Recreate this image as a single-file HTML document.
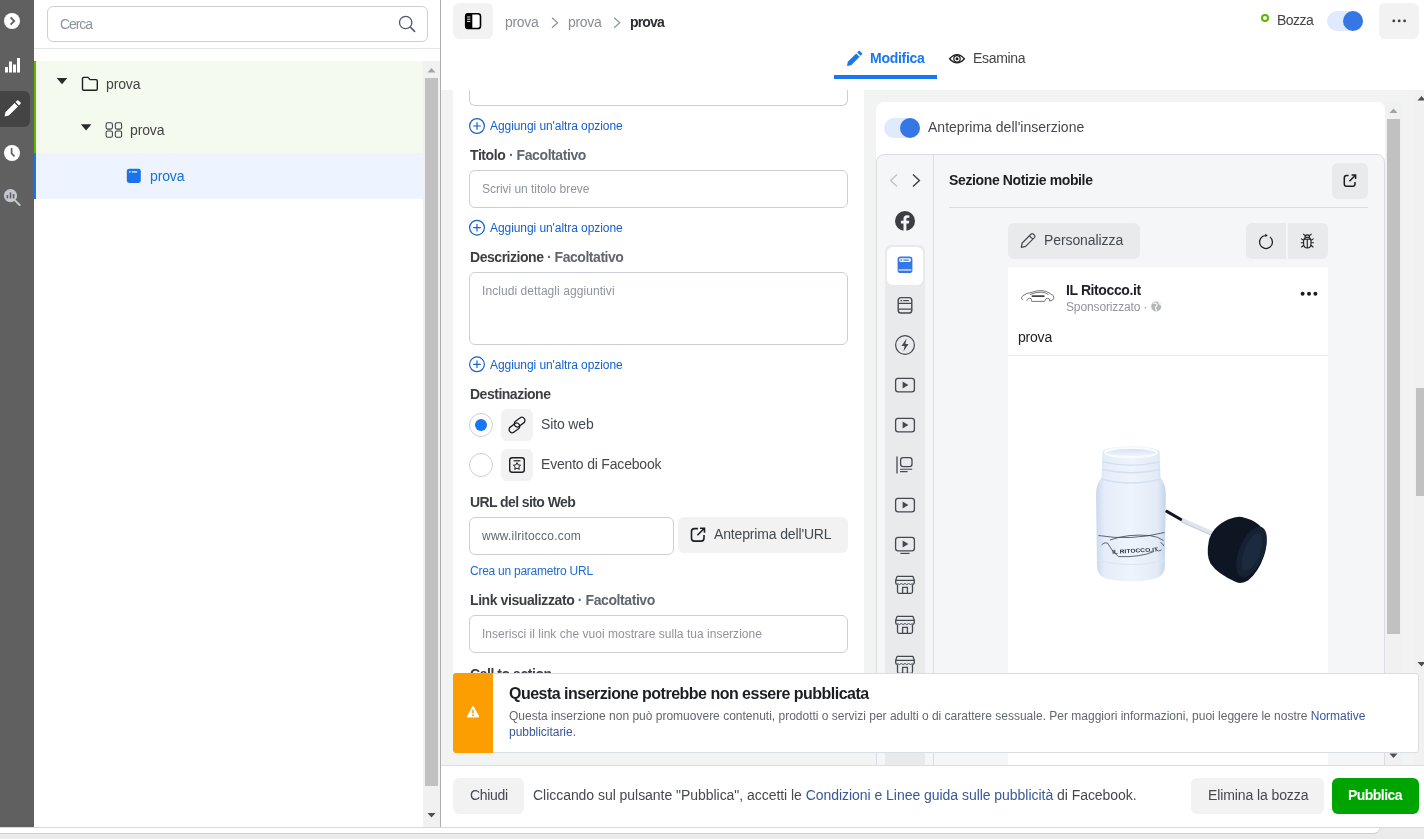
<!DOCTYPE html>
<html lang="it">
<head>
<meta charset="utf-8">
<title>Gestione inserzioni</title>
<style>
*{box-sizing:border-box;margin:0;padding:0}
html,body{width:1424px;height:839px;overflow:hidden;background:#fff}
body{font-family:"Liberation Sans",sans-serif;color:#1c1e21;position:relative}
.a{position:absolute}
.t{position:absolute;white-space:nowrap;line-height:1;font-size:14px;will-change:transform}
.t b{font-weight:700}
svg{position:absolute;overflow:visible}
/* sidebar */
#side{left:0;top:0;width:34px;height:827px;background:#606060}
#side .act{left:0;top:91px;width:30px;height:36px;background:#444;border-radius:0 6px 6px 0}
/* left panel */
#search{left:47px;top:6px;width:381px;height:36px;border:1px solid #ccd0d5;border-radius:6px;background:#fff}
#lpdiv{left:34px;top:48px;width:406px;height:1px;background:#e5e6e8}
.row{left:34px;width:389px;height:46px}
.r1{top:61px;background:#f5faee;border-left:2px solid #5db800}
.r2{top:107px;background:#f5faee;border-left:2px solid #5db800}
.r3{top:153px;background:#edf4ff;border-left:2px solid #1a73e8}
#lsb{left:423px;top:61px;width:17px;height:766px;background:#f1f1f1}
#lsb .th{left:2px;top:17px;width:13px;height:708px;background:#c1c1c1}
#vdiv{left:440px;top:0;width:1px;height:827px;background:#adadad}
/* main */
#graybg{left:441px;top:90px;width:983px;height:675px;background:#f2f3f3}
#formcard{left:453px;top:90px;width:411px;height:675px;background:#fff}
.inp{border:1px solid #ccd0d5;border-radius:6px;background:#fff}
.lbl{font-weight:700;color:#3b3e42}
.lbl i{font-style:normal;color:#606770}
.ph{font-size:12px;color:#8d949e}
.add{font-size:12px;color:#1461cc}
.btn{background:#f2f2f2;border-radius:6px}
.tx{color:#444950}
/* strip */
#strip{left:0;top:827px;width:1424px;height:12px;background:#ebebeb}
</style>
</head>
<body>

<!-- ================= SIDEBAR ================= -->
<div id="side" class="a">
  <div class="act a"></div>
</div>
<svg class="a" style="left:0;top:0" width="34" height="240" viewBox="0 0 34 240">
  <circle cx="12" cy="21" r="8" fill="#fff"/>
  <path d="M10.6 17.4 L14.2 21 L10.6 24.6" fill="none" stroke="#606060" stroke-width="1.8"/>
  <rect x="5" y="67" width="3" height="5.5" fill="#fff"/>
  <rect x="9" y="61.5" width="3" height="11" fill="#fff"/>
  <rect x="13" y="64.5" width="3" height="8" fill="#fff"/>
  <rect x="17" y="58" width="3" height="14.5" fill="#fff"/>
  <path d="M4.6 116.4 L5.4 112.2 L14.6 103 L18 106.4 L8.8 115.6 Z M15.6 102 L17.2 100.4 Q17.8 99.9 18.4 100.4 L20.6 102.6 Q21.1 103.2 20.6 103.8 L19 105.4 Z" fill="#fff"/>
  <circle cx="12" cy="153" r="8" fill="#fff"/>
  <path d="M11.6 148.5 V153.4 L14 155.8" fill="none" stroke="#606060" stroke-width="1.7" stroke-linecap="round"/>
  <circle cx="10.5" cy="195.7" r="6.6" fill="#c3c7cf"/>
  <path d="M15 200.4 L19.6 205" stroke="#c3c7cf" stroke-width="2" stroke-linecap="round"/>
  <rect x="6.6" y="195" width="1.6" height="3.4" fill="#606060"/>
  <rect x="9.7" y="192.4" width="1.6" height="6" fill="#606060"/>
  <rect x="12.8" y="194" width="1.6" height="4.4" fill="#606060"/>
</svg>

<!-- ================= LEFT PANEL ================= -->
<div id="search" class="a"></div>
<div class="t" style="letter-spacing:-1.09px;top:17px;left:60px;color:#8a94a0">Cerca</div>
<div id="lpdiv" class="a"></div>
<div class="row r1 a"></div>
<div class="row r2 a"></div>
<div class="row r3 a"></div>
<div class="t" style="letter-spacing:-0.13px;top:77px;left:106px;color:#444">prova</div>
<div class="t" style="letter-spacing:-0.13px;top:123px;left:130px;color:#444">prova</div>
<div class="t" style="letter-spacing:-0.13px;top:169px;left:150px;color:#1a6fe0">prova</div>
<div id="lsb" class="a"><div class="th a"></div></div>
<div id="vdiv" class="a"></div>
<svg class="a" style="left:0;top:0" width="440" height="210" viewBox="0 0 440 210">
  <circle cx="405.7" cy="22.5" r="6.2" fill="none" stroke="#4b5a6a" stroke-width="1.3"/>
  <path d="M410.2 27 L414.6 31.4" stroke="#4b5a6a" stroke-width="1.6" stroke-linecap="round"/>
  <path d="M56.7 78 H67.3 L62 84.2 Z" fill="#2b2b2b"/>
  <path d="M82.5 78.6 Q82.5 77.4 83.7 77.4 H88 L90 79.6 H96 Q97.3 79.6 97.3 80.9 V89 Q97.3 90.3 96 90.3 H83.8 Q82.5 90.3 82.5 89 Z" fill="none" stroke="#1c1e21" stroke-width="1.4" stroke-linejoin="round"/>
  <path d="M80.8 124.2 H91.4 L86.1 130.4 Z" fill="#2b2b2b"/>
  <g fill="none" stroke="#3b3e42" stroke-width="1.05">
    <rect x="106.1" y="122.8" width="6.3" height="6.3" rx="1.6"/>
    <rect x="115.3" y="122.8" width="6.3" height="6.3" rx="1.6"/>
    <rect x="106.1" y="131" width="6.3" height="6.3" rx="1.6"/>
    <rect x="115.3" y="131" width="6.3" height="6.3" rx="1.6"/>
  </g>
  <rect x="126.8" y="168.8" width="14" height="14.2" rx="2.4" fill="#1a73e8"/>
  <rect x="129" y="171.3" width="1.6" height="1.2" fill="#fff"/>
  <rect x="131.8" y="171.3" width="5.4" height="1.2" fill="#fff"/>
  <path d="M427.5 72.5 L431.5 68 L435.5 72.5 Z" fill="#a3a3a3"/>
</svg>
<svg class="a" style="left:423px;top:805px" width="17" height="20" viewBox="0 0 17 20"><path d="M4.5 8 L8.5 12.5 L12.5 8 Z" fill="#505050"/></svg>

<!-- ================= MAIN HEADER ================= -->
<div class="a btn" style="left:453px;top:3px;width:40px;height:36px"></div>
<div class="t" style="letter-spacing:-0.33px;top:15px;left:505px;color:#8a8d91">prova</div>
<div class="t" style="letter-spacing:-0.33px;top:15px;left:568px;color:#8a8d91">prova</div>
<div class="t" style="letter-spacing:-0.86px;top:15px;left:630px;color:#2b2d30;font-weight:700">prova</div>
<div class="t" style="letter-spacing:-0.51px;top:13px;left:1277px;color:#444">Bozza</div>
<div class="a" style="left:1327px;top:11px;width:36px;height:20px;border-radius:10px;background:#dfeafc"></div>
<div class="a" style="left:1343px;top:11px;width:20px;height:20px;border-radius:10px;background:#3578e5"></div>
<div class="a" style="left:1261px;top:14px;width:8px;height:8px;border-radius:4px;border:2px solid #5bb800"></div>
<div class="a btn" style="left:1379px;top:3px;width:40px;height:36px"></div>
<div class="t" style="letter-spacing:-0.28px;top:51px;left:870px;color:#1877f2;font-weight:700">Modifica</div>
<div class="t" style="letter-spacing:-0.31px;top:51px;left:973px;color:#444">Esamina</div>
<div class="a" style="left:834px;top:75px;width:103px;height:4px;background:#1877f2"></div>
<svg class="a" style="left:440px;top:0" width="984" height="90" viewBox="440 0 984 90">
  <rect x="465.7" y="13.7" width="14.8" height="14.8" rx="2.6" fill="#fff" stroke="#000" stroke-width="1.6"/>
  <path d="M472.3 13.2 V29 H468.3 Q465 29 465 25.7 V16.5 Q465 13.2 468.3 13.2 Z" fill="#000"/>
  <path d="M467 17 H470.4 M467 19.2 H470.4 M467 21.4 H470.4" stroke="#fff" stroke-width="0.9"/>
  <path d="M552 17.8 L557.6 22.8 L552 27.8" fill="none" stroke="#8793a3" stroke-width="1.2"/>
  <path d="M614.2 17.8 L619.8 22.8 L614.2 27.8" fill="none" stroke="#8793a3" stroke-width="1.2"/>
  <circle cx="1393.8" cy="20.9" r="1.4" fill="#3b3e42"/><circle cx="1399.2" cy="20.9" r="1.4" fill="#3b3e42"/><circle cx="1404.6" cy="20.9" r="1.4" fill="#3b3e42"/>
  <path d="M847 66 L847.8 61.8 L856.2 53.4 L859.6 56.8 L851.2 65.2 Z M857.2 52.4 L858.6 51 Q859.2 50.5 859.8 51 L862 53.2 Q862.5 53.8 862 54.4 L860.6 55.8 Z" fill="#1877f2"/>
  <path d="M949.6 58.8 Q957 50.6 964.4 58.8 Q957 67 949.6 58.8 Z" fill="none" stroke="#1c1e21" stroke-width="1.3"/>
  <circle cx="957" cy="58.8" r="3.2" fill="none" stroke="#1c1e21" stroke-width="1.2"/>
  <circle cx="957" cy="58.8" r="1.5" fill="#1c1e21"/>
</svg>

<!-- ================= CONTENT ================= -->
<div id="graybg" class="a"></div>
<div id="formcard" class="a"></div>
<div class="a inp" style="left:469px;top:70px;width:379px;height:36px;border-top:none;border-radius:0 0 6px 6px;clip-path:inset(20px 0 0 0)"></div>
<svg class="a" style="left:453px;top:90px" width="411" height="600" viewBox="453 90 411 600">
  <g fill="none" stroke="#1a5fc7" stroke-width="1.2">
    <circle cx="477" cy="126" r="7.4"/><path d="M473.2 126 H480.8 M477 122.2 V129.8"/>
    <circle cx="477" cy="227.7" r="7.4"/><path d="M473.2 227.7 H480.8 M477 223.9 V231.5"/>
    <circle cx="477" cy="364.3" r="7.4"/><path d="M473.2 364.3 H480.8 M477 360.5 V368.1"/>
  </g>
</svg>
<div class="t add" style="letter-spacing:-0.07px;top:120px;left:489.5px">Aggiungi un'altra opzione</div>
<div class="t lbl" style="letter-spacing:-0.41px;top:148px;left:469.5px">Titolo <i>· Facoltativo</i></div>
<div class="a inp" style="left:469px;top:170px;width:379px;height:38px"></div>
<div class="t ph" style="letter-spacing:-0.03px;top:183px;left:482px">Scrivi un titolo breve</div>
<div class="t add" style="letter-spacing:-0.07px;top:222px;left:489.5px">Aggiungi un'altra opzione</div>
<div class="t lbl" style="letter-spacing:-0.46px;top:250px;left:469.5px">Descrizione <i>· Facoltativo</i></div>
<div class="a inp" style="left:469px;top:272px;width:379px;height:73px"></div>
<div class="t ph" style="letter-spacing:0.07px;top:285px;left:482px">Includi dettagli aggiuntivi</div>
<div class="t add" style="letter-spacing:-0.07px;top:359px;left:489.5px">Aggiungi un'altra opzione</div>
<div class="t lbl" style="letter-spacing:-0.49px;top:387px;left:469.5px">Destinazione</div>
<div class="a" style="left:469px;top:413px;width:24px;height:24px;border-radius:12px;border:1px solid #ccd0d5;background:#fff"></div>
<div class="a" style="left:475px;top:419px;width:12px;height:12px;border-radius:6px;background:#1877f2"></div>
<div class="a btn" style="left:501px;top:409px;width:32px;height:32px"></div>
<div class="t tx" style="letter-spacing:-0.14px;top:417px;left:541.3px">Sito web</div>
<div class="a" style="left:469px;top:453px;width:24px;height:24px;border-radius:12px;border:1px solid #ccd0d5;background:#fff"></div>
<div class="a btn" style="left:501px;top:449px;width:32px;height:32px"></div>
<div class="t tx" style="letter-spacing:-0.19px;top:457px;left:541.3px">Evento di Facebook</div>
<div class="t lbl" style="letter-spacing:-0.59px;top:495px;left:469.5px">URL del sito Web</div>
<div class="a inp" style="left:469px;top:517px;width:205px;height:38px"></div>
<div class="t" style="letter-spacing:0.22px;top:530px;left:482px;font-size:12px;color:#606770">www.ilritocco.com</div>
<div class="a btn" style="left:678px;top:517px;width:170px;height:36px"></div>
<div class="t tx" style="letter-spacing:-0.15px;top:527px;left:714.2px">Anteprima dell'URL</div>
<div class="t add" style="letter-spacing:-0.25px;top:565px;left:469.5px;color:#1b6bd8">Crea un parametro URL</div>
<div class="t lbl" style="letter-spacing:-0.41px;top:593px;left:469.5px">Link visualizzato <i>· Facoltativo</i></div>
<div class="a inp" style="left:469px;top:615px;width:379px;height:38px"></div>
<div class="t ph" style="letter-spacing:0.02px;top:628px;left:482px">Inserisci il link che vuoi mostrare sulla tua inserzione</div>
<div class="t lbl" style="letter-spacing:-0.45px;top:667px;left:469.5px">Call to action</div>
<svg class="a" style="left:453px;top:400px" width="411" height="160" viewBox="453 400 411 160">
  <g fill="none" stroke="#1c1e21" stroke-width="1.3" stroke-linecap="round">
    <rect x="-5.9" y="-3.1" width="11.8" height="6.2" rx="3.1" transform="translate(519.6 422.1) rotate(-37)"/>
    <rect x="-5.9" y="-3.1" width="11.8" height="6.2" rx="3.1" transform="translate(514.4 427.9) rotate(-37)"/>
  </g>
  <rect x="509.7" y="457.7" width="14.6" height="14.6" rx="2.6" fill="none" stroke="#1c1e21" stroke-width="1.4"/>
  <path d="M513.6 460.8 H520.4" stroke="#1c1e21" stroke-width="1.2"/>
  <path d="M517 462.6 L518.1 464.9 L520.6 465.2 L518.8 466.9 L519.3 469.4 L517 468.2 L514.7 469.4 L515.2 466.9 L513.4 465.2 L515.9 464.9 Z" fill="none" stroke="#1c1e21" stroke-width="1"/>
  <path d="M698 528.6 H694.4 Q691.5 528.6 691.5 531.5 V538.2 Q691.5 541.1 694.4 541.1 H701.1 Q704 541.1 704 538.2 V535" fill="none" stroke="#1c1e21" stroke-width="1.6"/>
  <path d="M697.4 535.2 L704.4 528.2 M700 528.2 H704.5 V532.8" fill="none" stroke="#1c1e21" stroke-width="1.6"/>
</svg>
<div class="a" style="left:876px;top:102px;width:509px;height:663px;background:#fff;border-radius:8px 8px 0 0"></div>
<div class="a" style="left:884px;top:118px;width:36px;height:20px;border-radius:10px;background:#dfeafc"></div>
<div class="a" style="left:900px;top:118px;width:20px;height:20px;border-radius:10px;background:#3578e5"></div>
<div class="t tx" style="letter-spacing:0.01px;top:120px;left:928.4px">Anteprima dell'inserzione</div>
<div class="a" style="left:876px;top:154px;width:509px;height:620px;background:#f5f6f7;border:1px solid #dadde1;border-radius:8px 8px 0 0"></div>
<div class="a" style="left:933px;top:155px;width:1px;height:610px;background:#dadde1"></div>
<div class="a" style="left:885px;top:245px;width:40px;height:520px;background:#e9eaec;border-radius:6px 6px 0 0"></div>
<div class="a" style="left:887px;top:247px;width:36px;height:38px;background:#fff;border-radius:6px"></div>
<div class="t" style="letter-spacing:-0.37px;top:173px;left:949.4px;font-weight:700;color:#1c1e21">Sezione Notizie mobile</div>
<div class="a" style="left:1332px;top:163px;width:36px;height:36px;border-radius:6px;background:#e9eaec"></div>
<div class="a" style="left:949px;top:207px;width:419px;height:1px;background:#dadde1"></div>
<div class="a" style="left:1008px;top:223px;width:132px;height:36px;border-radius:6px;background:#e9eaec"></div>
<div class="t tx" style="letter-spacing:-0.09px;top:233px;left:1044.2px">Personalizza</div>
<div class="a" style="left:1246px;top:223px;width:40px;height:36px;border-radius:6px 0 0 6px;background:#e9eaec"></div>
<div class="a" style="left:1288px;top:223px;width:40px;height:36px;border-radius:0 6px 6px 0;background:#e9eaec"></div>
<div class="a" style="left:1008px;top:267px;width:320px;height:498px;background:#fff"></div>
<div class="t" style="letter-spacing:-0.4px;top:283px;left:1066.4px;font-weight:700;color:#1d2129">IL Ritocco.it</div>
<div class="t" style="letter-spacing:-0.13px;top:301px;left:1066.4px;font-size:12px;color:#90949c">Sponsorizzato ·</div>
<div class="t" style="letter-spacing:-0.21px;top:330px;left:1018.4px;color:#1c1e21">prova</div>
<div class="a" style="left:1008px;top:355px;width:320px;height:1px;background:#e9ebee"></div>
<svg class="a" style="left:876px;top:155px" width="510" height="520" viewBox="876 155 510 520">
  <path d="M897 174.4 L890.6 180.4 L897 186.4" fill="none" stroke="#bec3c9" stroke-width="1.4"/>
  <path d="M913 174.4 L919.4 180.4 L913 186.4" fill="none" stroke="#3b3e42" stroke-width="1.4"/>
  <circle cx="905" cy="221" r="10" fill="#3b3e42"/>
  <path d="M906.4 231.2 V223.6 H908.8 L909.3 220.8 H906.4 V219.2 Q906.4 217.8 908 217.8 H909.4 V215.4 Q908.2 215.2 907 215.2 Q903.5 215.2 903.5 218.8 V220.8 H900.9 V223.6 H903.5 V231.2 Z" fill="#f5f6f7"/>
  <rect x="897.6" y="256.6" width="14.8" height="16.4" rx="2.8" fill="#3578e5"/>
  <rect x="899.2" y="258.2" width="11.6" height="3.8" rx="1.4" fill="#fff"/>
  <circle cx="901.2" cy="260.1" r="0.9" fill="#3578e5"/><rect x="903.2" y="259.5" width="5.8" height="1.2" fill="#3578e5"/>
  <rect x="898.6" y="269.4" width="12.8" height="1.1" fill="#fff"/>
  <rect x="898.2" y="297.6" width="13.6" height="15.4" rx="2.8" fill="none" stroke="#444950" stroke-width="1.4"/>
  <path d="M898.2 303.4 H911.8 M898.2 309.2 H911.8" stroke="#444950" stroke-width="1.2"/>
  <circle cx="901.3" cy="300.6" r="0.9" fill="#444950"/><rect x="903.2" y="300" width="5.8" height="1.2" fill="#444950"/>
  <circle cx="905" cy="345" r="9.4" fill="none" stroke="#444950" stroke-width="1.2"/>
  <path d="M906.6 338.6 L901.4 346 H904.6 L903.4 351.4 L908.6 344 H905.4 Z" fill="#444950"/>
  <rect x="895.6" y="378.4" width="18.8" height="13.4" rx="2.6" fill="none" stroke="#444950" stroke-width="1.3"/><path d="M902.6 381.6 L908.4 385 L902.6 388.6 Z" fill="#444950"/> <rect x="895.6" y="418.4" width="18.8" height="13.4" rx="2.6" fill="none" stroke="#444950" stroke-width="1.3"/><path d="M902.6 421.6 L908.4 425 L902.6 428.6 Z" fill="#444950"/>
  <path d="M897 456.4 V473.4" stroke="#444950" stroke-width="1.3"/>
  <rect x="900.6" y="457.6" width="11.4" height="9" rx="2.6" fill="none" stroke="#444950" stroke-width="1.3"/>
  <path d="M900 469.2 H912.2 M900 471.6 H907.6" stroke="#444950" stroke-width="1.1"/>
  <rect x="895.6" y="498.4" width="18.8" height="13.4" rx="2.6" fill="none" stroke="#444950" stroke-width="1.3"/><path d="M902.6 501.6 L908.4 505 L902.6 508.6 Z" fill="#444950"/>
  <rect x="895.6" y="537.4" width="18.8" height="13.4" rx="2.6" fill="none" stroke="#444950" stroke-width="1.3"/><path d="M902.6 540.6 L908.4 544 L902.6 547.6 Z" fill="#444950"/>
  <path d="M900.4 553.4 H909.6" stroke="#444950" stroke-width="1.2"/>
  <path d="M897.1 576.4 H912.9 L914.3 580.3 H895.7 Z" fill="none" stroke="#444950" stroke-width="1.3" stroke-linejoin="round"/><path d="M895.7 580.3 V582.8 Q896 584.4 897.7 584.2 M914.3 580.3 V582.8 Q914 584.4 912.3 584.2" fill="none" stroke="#444950" stroke-width="1.3"/><path d="M897.6 583.5 Q899.45 585.7 901.3 583.5 Q903.15 585.7 905 583.5 Q906.85 585.7 908.7 583.5 Q910.55 585.7 912.4 583.5" fill="none" stroke="#444950" stroke-width="1"/><path d="M897.5 584.6 V591.8 Q897.5 593.3 899 593.3 H911 Q912.5 593.3 912.5 591.8 V584.6" fill="none" stroke="#444950" stroke-width="1.3"/><path d="M902.6 593.3 V587.3 H907.4 V593.3" fill="none" stroke="#444950" stroke-width="1.3"/> <path d="M897.1 616.4 H912.9 L914.3 620.3 H895.7 Z" fill="none" stroke="#444950" stroke-width="1.3" stroke-linejoin="round"/><path d="M895.7 620.3 V622.8 Q896 624.4 897.7 624.2 M914.3 620.3 V622.8 Q914 624.4 912.3 624.2" fill="none" stroke="#444950" stroke-width="1.3"/><path d="M897.6 623.5 Q899.45 625.7 901.3 623.5 Q903.15 625.7 905 623.5 Q906.85 625.7 908.7 623.5 Q910.55 625.7 912.4 623.5" fill="none" stroke="#444950" stroke-width="1"/><path d="M897.5 624.6 V631.8 Q897.5 633.3 899 633.3 H911 Q912.5 633.3 912.5 631.8 V624.6" fill="none" stroke="#444950" stroke-width="1.3"/><path d="M902.6 633.3 V627.3 H907.4 V633.3" fill="none" stroke="#444950" stroke-width="1.3"/> <path d="M897.1 656.4 H912.9 L914.3 660.3 H895.7 Z" fill="none" stroke="#444950" stroke-width="1.3" stroke-linejoin="round"/><path d="M895.7 660.3 V662.8 Q896 664.4 897.7 664.2 M914.3 660.3 V662.8 Q914 664.4 912.3 664.2" fill="none" stroke="#444950" stroke-width="1.3"/><path d="M897.6 663.5 Q899.45 665.7 901.3 663.5 Q903.15 665.7 905 663.5 Q906.85 665.7 908.7 663.5 Q910.55 665.7 912.4 663.5" fill="none" stroke="#444950" stroke-width="1"/><path d="M897.5 664.6 V671.8 Q897.5 673.3 899 673.3 H911 Q912.5 673.3 912.5 671.8 V664.6" fill="none" stroke="#444950" stroke-width="1.3"/><path d="M902.6 673.3 V667.3 H907.4 V673.3" fill="none" stroke="#444950" stroke-width="1.3"/>
  <path d="M1348.600 175.600 H1346.600 Q1344.300 175.600 1344.300 177.900 V184 Q1344.300 186.300 1346.600 186.300 H1352.700 Q1355 186.300 1355 184 V182" fill="none" stroke="#1c1e21" stroke-width="1.5"/>
  <path d="M1349.400 181.200 L1355.400 175.200 M1351.600 175 H1355.600 V179" fill="none" stroke="#1c1e21" stroke-width="1.5"/>
  <path d="M1021.4 246.6 L1022.2 243 L1031.2 234 Q1032.2 233.2 1033.2 234 L1034.6 235.400 Q1035.4 236.400 1034.6 237.400 L1025.600 246.400 L1021.4 247.4 Z M1029.4 235.8 L1032.8 239.2" fill="none" stroke="#444950" stroke-width="1.2" stroke-linejoin="round"/>
  <path d="M1270.00 236.88 A6.5 6.5 0 1 1 1265.70 235.50" fill="none" stroke="#1c1e21" stroke-width="1.25"/>
  <path d="M1265.200 233.800 L1267.800 235.400 L1265.200 237 Z" fill="#1c1e21"/>
  <g fill="none" stroke="#1c1e21" stroke-width="1.1">
    <path d="M1303.600 241.500 Q1303.600 237.400 1307.300 237.400 Q1311 237.400 1311 241.500 V243.500 Q1311 248 1307.300 248 Q1303.600 248 1303.600 243.500 Z"/>
    <path d="M1303.800 239.300 H1310.800 M1307.300 239.300 V248"/>
    <path d="M1305 237.400 Q1305 234.900 1307.300 234.900 Q1309.600 234.900 1309.600 237.400"/>
    <path d="M1305.400 235.800 L1303.200 233.800 M1309.200 235.800 L1311.600 233.800"/>
    <path d="M1303.600 240.400 L1301 238.600 M1303.600 242.800 H1300.800 M1303.800 245.200 L1301.200 247.200 M1311 240.400 L1313.600 238.600 M1311 242.800 H1313.800 M1310.800 245.200 L1313.400 247.200"/>
  </g>
  <circle cx="1302.6" cy="293.8" r="2" fill="#1c1e21"/><circle cx="1309" cy="293.8" r="2" fill="#1c1e21"/><circle cx="1315.400" cy="293.8" r="2" fill="#1c1e21"/>
  <circle cx="1156.2" cy="306.4" r="5" fill="#b3b6bb"/>
  <path d="M1153.2 303.4 Q1155.2 302.400 1156.600 303.800 Q1157.800 305.200 1156.400 306.200 Q1154.800 307.200 1155.600 308.800 L1156.800 311 M1158.400 302.400 Q1159.800 304.400 1161 305.400" fill="none" stroke="#fff" stroke-width="1.1"/>
  <g fill="none" stroke="#555" stroke-width="0.8">
    <path d="M1021.4 297.6 Q1024 293.600 1031 292.600 Q1036 290.400 1042 290.600 Q1047 291 1050.600 293.800 Q1054.200 295 1054 298.200"/>
    <path d="M1023 299.800 Q1021 298.800 1021.600 297.400 M1026.800 300.800 Q1027.600 297.400 1031 298.600 Q1031.800 299.600 1031.400 301.200 M1044.800 301 Q1045.600 297.600 1049 298.600 Q1050 299.800 1049.400 301.400 M1031.600 301.400 H1044.600 M1050 300.800 Q1053.400 300.400 1054 298.200"/>
    <path d="M1030 294.600 Q1036 291.800 1042 292.200 Q1046 292.600 1048.400 294.600"/>
  </g>
  <rect x="1031.600" y="295.200" width="13" height="1.900" rx="0.900" fill="#444"/>
</svg>
<svg class="a" style="left:1008px;top:356px" width="320" height="320" viewBox="1008 356 320 320">
  <defs>
    <linearGradient id="bg1" x1="0" x2="1" y1="0" y2="0">
      <stop offset="0" stop-color="#c9d9ee"/><stop offset="0.12" stop-color="#e4edf9"/><stop offset="0.5" stop-color="#eef4fc"/><stop offset="0.88" stop-color="#e2ebf7"/><stop offset="1" stop-color="#c4d4ea"/>
    </linearGradient>
    <linearGradient id="bg2" x1="0" x2="0" y1="0" y2="1">
      <stop offset="0" stop-color="#d3dff0"/><stop offset="1" stop-color="#f4f8fd"/>
    </linearGradient>
    <filter id="soft" x="-10%" y="-10%" width="120%" height="120%"><feGaussianBlur stdDeviation="0.7"/></filter>
  </defs>
  <g filter="url(#soft)">
    <path d="M1102.500 452 Q1102.500 447 1131 446.200 Q1159.500 447 1159.500 452 L1160.500 478 Q1165.800 484 1165.800 494 L1164.800 566 Q1164.800 577 1152 579.600 Q1131 583.500 1110 579.600 Q1097 577 1097 566 L1096 494 Q1096 484 1101.500 478 Z" fill="url(#bg1)"/>
    <ellipse cx="1131" cy="452.600" rx="26" ry="4.600" fill="url(#bg2)" stroke="#f8fbff" stroke-width="2.200"/>
    <path d="M1102.800 462 Q1131 468.500 1159.600 462 M1102.400 469.500 Q1131 476 1160 469.500 M1101 479 Q1131 487 1161 479" fill="none" stroke="#d4e0f0" stroke-width="1.400"/>
    <path d="M1097 560 Q1131 569 1164.800 560" fill="none" stroke="#dbe5f3" stroke-width="1.200"/>
  </g>
  <g fill="none" stroke="#3a4250" stroke-width="0.800">
    <path d="M1098.500 535.500 Q1130 541 1164.500 532.500"/>
    <path d="M1110 540 Q1128 533.500 1150 535.600 Q1158 536.500 1163.500 540.500"/>
    <path d="M1101.500 545 Q1103.500 542 1107.500 543 Q1112.500 552.500 1118.500 556.600 Q1140 557.500 1154 551.500"/>
    <path d="M1155.500 549 Q1158 552.500 1161.500 550 M1160.500 542.500 Q1163 543.500 1163.800 546"/>
  </g>
  <text x="1112" y="552.600" transform="rotate(-3 1135 550)" font-family="'Liberation Sans',sans-serif" font-weight="700" font-size="5.600" textLength="46" lengthAdjust="spacingAndGlyphs" fill="#2c3442">IL RITOCCO.IT</text>
  <g filter="url(#soft)">
    <path d="M1166.800 511.400 L1181.800 520" stroke="#111722" stroke-width="3" stroke-linecap="round"/>
    <path d="M1181.800 520 L1217 535.500" stroke="#dde4ee" stroke-width="4.200"/>
    <path d="M1181.500 522 L1216 537.400" stroke="#b9c4d2" stroke-width="0.900"/>
    <path d="M1208.800 541 Q1212 527 1228 519.500 Q1238 515.500 1243.500 517.500 Q1262 521.500 1266 537.500 Q1267.500 545.500 1264 556 Q1258.500 572 1248 580.500 Q1241.500 584.500 1236 582 Q1217.500 574 1210.500 563.500 Q1206 555.500 1208.800 541 Z" fill="#0c1424"/>
    <ellipse cx="1251.500" cy="552" rx="12.500" ry="27" transform="rotate(22 1251.500 552)" fill="#162033"/>
    <ellipse cx="1252" cy="552" rx="8" ry="20" transform="rotate(22 1252 552)" fill="#1d2940"/>
  </g>
</svg>
<!-- scrollbars -->
<div class="a" style="left:1385px;top:102px;width:17px;height:663px;background:#f1f1f1"></div>
<div class="a" style="left:1387px;top:119px;width:13px;height:515px;background:#c1c1c1"></div>
<div class="a" style="left:1414px;top:90px;width:10px;height:675px;background:#f1f1f1"></div>
<div class="a" style="left:1416px;top:388px;width:8px;height:108px;background:#c1c1c1"></div>
<svg class="a" style="left:1385px;top:90px" width="39" height="675" viewBox="1385 90 39 675">
  <path d="M1389.5 113 L1393.5 108.5 L1397.5 113 Z" fill="#a3a3a3"/>
  <path d="M1389.5 753.5 L1393.5 758 L1397.5 753.5 Z" fill="#505050"/>
  <path d="M1417.5 100.5 L1421.5 96 L1425.5 100.5 Z" fill="#505050"/>
  <path d="M1417.5 662 L1421.5 666.5 L1425.5 662 Z" fill="#505050"/>
</svg>
<div class="a" style="left:441px;top:753px;width:435px;height:12px;background:#f2f3f3"></div>
<div class="a" style="left:453px;top:673px;width:966px;height:80px;background:#fff;border:1px solid #dadde1;border-radius:3px"></div>
<div class="a" style="left:453px;top:673px;width:40px;height:80px;background:#fc9e02;border-radius:3px 0 0 3px"></div>
<svg class="a" style="left:466px;top:705px" width="14" height="14" viewBox="0 0 14 14">
  <path d="M7 1.2 Q7.6 1.2 7.9 1.8 L12.9 11 Q13.3 12.2 12 12.4 H2 Q0.7 12.2 1.1 11 L6.1 1.8 Q6.4 1.2 7 1.2 Z" fill="#fff"/>
  <rect x="6.2" y="4.6" width="1.6" height="4" rx="0.5" fill="#fc9e02"/>
  <circle cx="7" cy="10.3" r="0.95" fill="#fc9e02"/>
</svg>
<div class="t" style="letter-spacing:-0.51px;top:686px;left:509.3px;font-size:16px;font-weight:700;color:#1c1e21">Questa inserzione potrebbe non essere pubblicata</div>
<div class="t" style="top:710px;left:509.3px;font-size:12px;color:#606770">Questa inserzione non può promuovere contenuti, prodotti o servizi per adulti o di carattere sessuale. Per maggiori informazioni, puoi leggere le nostre <span style="color:#385898">Normative</span></div>
<div class="t" style="letter-spacing:-0.03px;top:726px;left:509.3px;font-size:12px;color:#606770"><span style="color:#385898">pubblicitarie</span>.</div>
<div class="a" style="left:441px;top:765px;width:983px;height:62px;background:#fff;border-top:1px solid #dadde1"></div>
<div class="a btn" style="left:453px;top:778px;width:71px;height:36px"></div>
<div class="t tx" style="letter-spacing:-0.3px;top:788px;left:469.5px">Chiudi</div>
<div class="t tx" style="letter-spacing:-0.04px;top:788px;left:532.7px">Cliccando sul pulsante "Pubblica", accetti le <span style="color:#385898">Condizioni e Linee guida sulle pubblicità</span> di Facebook.</div>
<div class="a btn" style="left:1191px;top:778px;width:133px;height:36px"></div>
<div class="t tx" style="letter-spacing:-0.1px;top:788px;left:1207.5px">Elimina la bozza</div>
<div class="a" style="left:1332px;top:778px;width:87px;height:36px;border-radius:6px;background:#00a400"></div>
<div class="t" style="letter-spacing:-0.55px;top:788px;left:1348.2px;font-weight:700;color:#fff">Pubblica</div>
<div id="strip" class="a"></div>
<div class="a" style="left:0;top:827px;width:1424px;height:1px;background:#d9d9d9"></div>
<div class="a" style="left:0;top:828px;width:1380px;height:6px;background:#fff;border-bottom:1px solid #cfcfcf;border-right:1px solid #d9d9d9;border-radius:0 0 6px 0"></div>
</body>
</html>
